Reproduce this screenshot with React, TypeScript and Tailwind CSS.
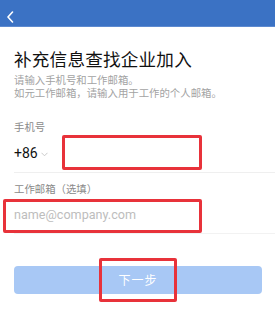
import React from 'react';

const cjk = { fontFamily: '"Noto Sans CJK SC", "Noto Sans", sans-serif' };
const latin = { fontFamily: 'Roboto, "Liberation Sans", "Noto Sans CJK SC", sans-serif' };

export default function App() {
  return (
    <div className="relative w-[275px] h-[312px] bg-white overflow-hidden" style={cjk}>
      {/* top bar */}
      <div className="h-[27px] bg-[#3b72c4] flex items-start pl-[6px] pt-[11px] border-b border-[#5d8ad0]">
        <svg width="8" height="12" viewBox="0 0 8 12" fill="none">
          <path d="M6.5 1L2 6L6.5 11" stroke="white" strokeWidth="1.6" strokeLinecap="round" strokeLinejoin="round" />
        </svg>
      </div>

      <div className="pl-[14px] pt-[20px]">
        <h1 className="text-[17.6px] leading-[24px] text-[#111] font-normal tracking-[0.2px]">补充信息查找企业加入</h1>
        <div className="mt-[3px] text-[10.4px] leading-[12.5px] text-[#a3a3a3]">
          <p>请输入手机号和工作邮箱。</p>
          <p>如元工作邮箱，请输入用于工作的个人邮箱。</p>
        </div>

        <div className="mt-[21px] text-[10.4px] leading-[14px] text-[#8a8a8a]">手机号</div>
        <div className="mt-[1px] h-[38px] border-b border-[#efefef] flex items-center gap-[3px]">
          <span className="text-[14px] text-[#111]" style={latin}>+86</span>
          <svg width="7" height="5" viewBox="0 0 7 5" fill="none" className="mt-[1px]">
            <path d="M0.5 0.8L3.5 3.8L6.5 0.8" stroke="#c4c4c4" strokeWidth="0.9" />
          </svg>
        </div>

        <div className="mt-[9px] text-[10.4px] leading-[14px] text-[#8a8a8a]">工作邮箱（选填）</div>
        <div className="mt-[2px] h-[36px] border-b border-[#f2f2f2] flex items-center">
          <span className="text-[12.6px] text-[#bdbdbd]" style={latin}>name@company.com</span>
        </div>

        <div className="mt-[32px] mr-[13px] h-[28px] rounded-[4px] bg-[#a8c8f5] flex items-center justify-center">
          <span className="text-[12px] text-white tracking-[1px]">下一步</span>
        </div>
      </div>

      {/* annotation boxes */}
      <div className="absolute left-[62px] top-[135px] w-[140px] h-[35px] border-[3px] border-[#e8323a] rounded-[2px]" />
      <div className="absolute left-[3px] top-[199px] w-[199px] h-[34px] border-[3px] border-[#e8323a] rounded-[2px]" />
      <div className="absolute left-[99px] top-[258px] w-[78px] h-[44px] border-[3px] border-[#e8323a] rounded-[2px]" />
    </div>
  );
}
